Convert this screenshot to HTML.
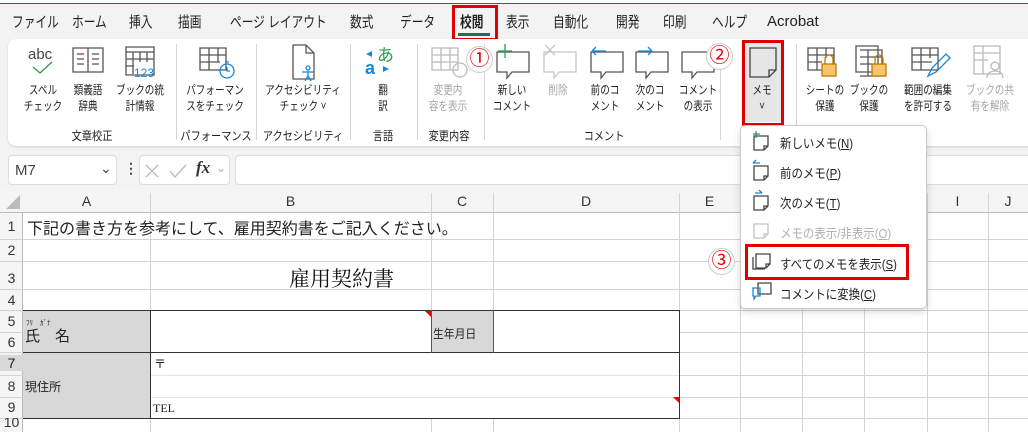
<!DOCTYPE html>
<html><head><meta charset="utf-8"><style>
*{margin:0;padding:0;box-sizing:border-box}
body{width:1028px;height:432px;overflow:hidden;background:#f3f3f3;font-family:"Liberation Sans","Noto Sans CJK JP",sans-serif;position:relative;color:#222}
.a{position:absolute;white-space:nowrap}
.tab{position:absolute;top:11px;font-size:15px;color:#222;white-space:nowrap;transform:scaleX(.78);transform-origin:left}
.lbl{position:absolute;font-size:12px;text-align:center;line-height:16px;color:#222;transform:translateX(-50%) scaleX(.8);white-space:nowrap}
.gl{position:absolute;top:127px;font-size:12px;transform:translateX(-50%) scaleX(.85);color:#222;white-space:nowrap}
.sep{position:absolute;top:44px;width:1px;height:96px;background:#d6d6d6}
.dis{color:#a6a6a6}
.hl{position:absolute;background:#d4d4d4}
.rh{position:absolute;left:0;width:23px;text-align:center;font-size:14px;color:#333}
.ch{position:absolute;top:193px;font-size:14px;text-align:center;color:#333}
.mi{position:absolute;left:780px;font-size:13px;color:#222;white-space:nowrap;transform:scaleX(.88);transform-origin:left}
.circ{position:absolute;width:27px;height:27px;border-radius:50%;background:#fff;border:1px solid #ccc;color:#e00000;font-size:20px;text-align:center;line-height:25px}
</style></head><body>
<div class="a" style="left:0;top:0;width:1028px;height:3px;background:#fff"></div>
<div class="a" style="left:0;top:3px;width:1028px;height:1px;background:#217346"></div>
<div class="tab" style="left:12px">ファイル</div>
<div class="tab" style="left:72px">ホーム</div>
<div class="tab" style="left:129px">挿入</div>
<div class="tab" style="left:178px">描画</div>
<div class="tab" style="left:230px">ページ レイアウト</div>
<div class="tab" style="left:350px">数式</div>
<div class="tab" style="left:400px">データ</div>
<div class="tab" style="left:460px;font-weight:bold">校閲</div>
<div class="a" style="left:458px;top:33px;width:32px;height:3px;background:#1e7145"></div>
<div class="a" style="left:452px;top:5px;width:46px;height:36px;border:3px solid #e00000"></div>
<div class="tab" style="left:506px">表示</div>
<div class="tab" style="left:553px">自動化</div>
<div class="tab" style="left:616px">開発</div>
<div class="tab" style="left:663px">印刷</div>
<div class="tab" style="left:712px">ヘルプ</div>
<div class="a" style="left:767px;top:13px;font-size:15px">Acrobat</div>

<!-- ribbon -->
<div class="a" style="left:8px;top:39px;width:1030px;height:107px;background:#fff;border-radius:8px;box-shadow:0 1px 2px rgba(0,0,0,.15)"></div>
<div class="sep" style="left:176px"></div><div class="sep" style="left:256px"></div><div class="sep" style="left:350px"></div><div class="sep" style="left:417px"></div><div class="sep" style="left:484px"></div><div class="sep" style="left:720px"></div><div class="sep" style="left:796px"></div>

<svg class="a" style="left:0;top:40px" width="1028" height="50" fill="none" stroke-width="1.3">
<text x="28" y="19" font-size="15" fill="#444" stroke="none" font-family="Liberation Sans">abc</text>
<path d="M33 27l7 6 12-11" stroke="#2e9c4a"/>
<path d="M73 8h30v24H73zM88 8v24M77 14h7M77 19h7M77 24h7M92 14h7M92 19h7M92 24h7" stroke="#555"/>
<path d="M78 14h6" stroke="#e04050"/>
<path d="M126 7h28v28h-28zM126 12h28M133 12v22M140 12v10M147 12v10M126 19h28M126 26h8" stroke="#555"/>
<text x="134" y="37" font-size="12" fill="#1a86d8" stroke="none">123</text>
<path d="M200 8h26v22h-26zM200 15h26M200 22h20M209 8v22M218 8v14" stroke="#555"/>
<circle cx="227" cy="31" r="7" stroke="#1a86d8"/><path d="M227 27v4h3M225 22h4" stroke="#1a86d8"/>
<path d="M293 5h13l8 8v26h-21zM306 5v8h8" stroke="#555"/>
<circle cx="308" cy="28" r="2" stroke="#1a86d8"/><path d="M302 32h12M308 31v5l-3 5M308 36l3 5" stroke="#1a86d8"/>
<text x="365" y="34" font-size="18" fill="#1a86d8" stroke="none" font-weight="bold">a</text>
<text x="377" y="21" font-size="17" fill="#2e9c4a" stroke="none">あ</text>
<path d="M366 14l6-3v6zM389 29l-6 3v-6z" fill="#1a86d8" stroke="none"/>
<path d="M432 8h26v22h-26zM432 15h26M432 22h26M441 8v22M450 8v22" stroke="#bbb"/>
<circle cx="460" cy="30" r="7" stroke="#bbb"/>
<path d="M497 12h32v20h-17l-5 6v-6h-10z" stroke="#555"/><path d="M505 4v14M498 11h14" stroke="#2e9c4a"/>
<path d="M544 12h32v20h-17l-5 6v-6h-10z" stroke="#c8c8c8"/><path d="M545 5l10 10M555 5l-10 10" stroke="#c8c8c8"/>
<path d="M591 12h32v20h-17l-5 6v-6h-10z" stroke="#555"/><path d="M592 11h14M592 11l4-4M592 11l4 4" stroke="#1a86d8"/>
<path d="M636 12h32v20h-17l-5 6v-6h-10z" stroke="#555"/><path d="M638 11h14M652 11l-4-4M652 11l-4 4" stroke="#1a86d8"/>
<path d="M682 12h32v20h-17l-5 6v-6h-10z" stroke="#555"/>
<path d="M750 8h30v22l-8 8h-22z M772 38v-8h8" stroke="#444"/>
<path d="M808 8h26v22h-26zM808 15h26M808 22h14M817 8v22M826 8v10" stroke="#555"/><rect x="822" y="24" width="14" height="12" fill="#f8c56a" stroke="#c07a00"/><path d="M825 24v-5a4 4 0 018 0v5" stroke="#c07a00"/>
<path d="M856 6h22v26h-22zM860 10h22v26h-22M860 17h22M860 24h12M868 10v26" stroke="#555"/><rect x="872" y="24" width="14" height="12" fill="#f8c56a" stroke="#c07a00"/><path d="M875 24v-5a4 4 0 018 0v5" stroke="#c07a00"/>
<path d="M912 8h26v22h-26zM912 15h26M912 22h20M921 8v22M930 8v10" stroke="#555"/><path d="M928 36l4-8 14-14 4 4-14 14z" stroke="#1a86d8"/>
<path d="M974 6h26v28h-26zM974 13h26M974 20h14M983 6v28" stroke="#bbb"/><circle cx="995" cy="26" r="4" stroke="#bbb"/><path d="M987 38c0-5 4-7 8-7s8 2 8 7" stroke="#bbb"/>
</svg>

<div class="lbl" style="left:43px;top:82px">スペル<br>チェック</div>
<div class="lbl" style="left:88px;top:82px">類義語<br>辞典</div>
<div class="lbl" style="left:140px;top:82px">ブックの統<br>計情報</div>
<div class="lbl" style="left:215px;top:82px">パフォーマン<br>スをチェック</div>
<div class="lbl" style="left:303px;top:82px">アクセシビリティ<br>チェック ˅</div>
<div class="lbl" style="left:383px;top:82px">翻<br>訳</div>
<div class="lbl dis" style="left:448px;top:82px">変更内<br>容を表示</div>
<div class="lbl" style="left:512px;top:82px">新しい<br>コメント</div>
<div class="lbl dis" style="left:558px;top:82px">削除<br>&nbsp;</div>
<div class="lbl" style="left:605px;top:82px">前のコ<br>メント</div>
<div class="lbl" style="left:650px;top:82px">次のコ<br>メント</div>
<div class="lbl" style="left:698px;top:82px">コメント<br>の表示</div>
<div class="a" style="left:745px;top:42px;width:36px;height:80px;background:#e6e6e6"></div>
<svg class="a" style="left:745px;top:42px" width="36" height="40" fill="none" stroke="#444" stroke-width="1.3"><path d="M5 6h26v22l-7 7H5zM24 35v-7h7"/></svg>
<div class="lbl" style="left:762px;top:82px">メモ<br>˅</div>
<div class="a" style="left:742px;top:40px;width:42px;height:86px;border:3px solid #e00000"></div>
<div class="lbl" style="left:825px;top:82px">シートの<br>保護</div>
<div class="lbl" style="left:869px;top:82px">ブックの<br>保護</div>
<div class="lbl" style="left:928px;top:82px">範囲の編集<br>を許可する</div>
<div class="lbl dis" style="left:990px;top:82px">ブックの共<br>有を解除</div>
<div class="gl" style="left:92px">文章校正</div>
<div class="gl" style="left:216px">パフォーマンス</div>
<div class="gl" style="left:303px">アクセシビリティ</div>
<div class="gl" style="left:383px">言語</div>
<div class="gl" style="left:449px">変更内容</div>
<div class="gl" style="left:604px">コメント</div>
<div class="circ" style="left:466px;top:46px">①</div>
<div class="circ" style="left:706px;top:43px">②</div>

<!-- formula bar -->
<div class="a" style="left:8px;top:155px;width:109px;height:30px;background:#fff;border:1px solid #ddd;border-radius:4px"></div>
<div class="a" style="left:15px;top:162px;font-size:15px;color:#444">M7</div>
<div class="a" style="left:100px;top:160px;font-size:14px;color:#444">⌄</div>
<div class="a" style="left:124px;top:160px;font-size:14px;color:#444;font-weight:bold">⋮</div>
<div class="a" style="left:139px;top:155px;width:91px;height:30px;background:#fff;border:1px solid #ddd;border-radius:4px"></div>
<svg class="a" style="left:143px;top:162px" width="50" height="18" fill="none" stroke="#bbb" stroke-width="1.3"><path d="M3 3l12 12M15 3L3 15M27 9l5 6 11-12"/></svg>
<div class="a" style="left:196px;top:158px;font-size:17px;color:#333;font-family:'Liberation Serif',serif;font-style:italic;font-weight:bold">fx</div>
<div class="a" style="left:216px;top:161px;font-size:12px;color:#aaa">⌄</div>
<div class="a" style="left:235px;top:155px;width:800px;height:30px;background:#fff;border:1px solid #ddd;border-radius:4px"></div>

<!-- grid -->
<div class="a" style="left:0;top:190px;width:1028px;height:242px;background:#fff"></div>
<div class="a" style="left:0;top:190px;width:1028px;height:23px;background:#f5f5f5;border-bottom:1px solid #bbb"></div>
<div class="a" style="left:0;top:213px;width:23px;height:219px;background:#f5f5f5;border-right:1px solid #bbb"></div>
<svg class="a" style="left:5px;top:194px" width="16" height="16"><path d="M15 1V15H1z" fill="#bbb"/></svg>
<div class="ch" style="left:23px;width:127px">A</div>
<div class="ch" style="left:150px;width:281px">B</div>
<div class="ch" style="left:431px;width:62px">C</div>
<div class="ch" style="left:493px;width:186px">D</div>
<div class="ch" style="left:679px;width:61px">E</div>
<div class="ch" style="left:927px;width:61px">I</div>
<div class="ch" style="left:988px;width:40px">J</div>
<div class="hl" style="left:150px;top:193px;width:1px;height:239px"></div>
<div class="hl" style="left:431px;top:193px;width:1px;height:239px"></div>
<div class="hl" style="left:493px;top:193px;width:1px;height:239px"></div>
<div class="hl" style="left:679px;top:193px;width:1px;height:239px"></div>
<div class="hl" style="left:740px;top:193px;width:1px;height:239px"></div>
<div class="hl" style="left:802px;top:193px;width:1px;height:239px"></div>
<div class="hl" style="left:864px;top:193px;width:1px;height:239px"></div>
<div class="hl" style="left:927px;top:193px;width:1px;height:239px"></div>
<div class="hl" style="left:988px;top:193px;width:1px;height:239px"></div>
<div class="hl" style="left:0;top:239px;width:1028px;height:1px"></div>
<div class="hl" style="left:0;top:261px;width:1028px;height:1px"></div>
<div class="hl" style="left:0;top:289px;width:1028px;height:1px"></div>
<div class="hl" style="left:0;top:310px;width:1028px;height:1px"></div>
<div class="hl" style="left:0;top:332px;width:1028px;height:1px"></div>
<div class="hl" style="left:0;top:352px;width:1028px;height:1px"></div>
<div class="hl" style="left:0;top:375px;width:1028px;height:1px"></div>
<div class="hl" style="left:0;top:397px;width:1028px;height:1px"></div>
<div class="hl" style="left:0;top:418px;width:1028px;height:1px"></div>
<div class="rh" style="top:218px">1</div>
<div class="rh" style="top:242px">2</div>
<div class="rh" style="top:270px">3</div>
<div class="rh" style="top:292px">4</div>
<div class="rh" style="top:313px">5</div>
<div class="rh" style="top:334px">6</div>
<div class="rh" style="top:355px;background:#d8d8d8;color:#222">7</div>
<div class="rh" style="top:378px">8</div>
<div class="rh" style="top:399px">9</div>
<div class="rh" style="top:418px;height:10px;overflow:hidden;line-height:8px">10</div>
<div class="a" style="left:23px;top:352px;width:2px;height:23px;background:#217346"></div>

<div class="a" style="left:27px;top:215px;font-size:16px;color:#222">下記の書き方を参考にして、雇用契約書をご記入ください。</div>
<div class="a" style="left:289px;top:263px;font-size:21px;font-family:'Liberation Serif','Noto Serif CJK SC',serif;color:#111">雇用契約書</div>
<div class="a" style="left:23px;top:310px;width:128px;height:108px;background:#d8d8d8"></div>
<div class="a" style="left:431px;top:310px;width:62px;height:43px;background:#d8d8d8"></div>
<div class="a" style="left:151px;top:311px;width:280px;height:41px;background:#fff"></div>
<div class="a" style="left:494px;top:311px;width:185px;height:41px;background:#fff"></div>
<div class="a" style="left:151px;top:353px;width:528px;height:65px;background:#fff"></div>
<div class="hl" style="left:151px;top:375px;width:528px;height:1px;background:#e4e4e4"></div>
<div class="hl" style="left:151px;top:397px;width:528px;height:1px;background:#e4e4e4"></div>
<div class="a" style="left:23px;top:310px;width:657px;height:109px;border:1px solid #333;border-left:none"></div>
<div class="a" style="left:23px;top:352px;width:657px;height:1px;background:#333"></div>
<div class="a" style="left:150px;top:310px;width:1px;height:109px;background:#333"></div>
<div class="a" style="left:431px;top:310px;width:1px;height:43px;background:#555"></div>
<div class="a" style="left:493px;top:310px;width:1px;height:43px;background:#555"></div>
<div class="a" style="left:25px;top:325px;font-size:15px">氏　名</div>
<div class="a" style="left:26px;top:318px;font-size:7px">ﾌﾘ　ｶﾞﾅ</div>
<div class="a" style="left:433px;top:325px;font-size:12px;transform:scaleX(.9);transform-origin:left">生年月日</div>
<div class="a" style="left:25px;top:378px;font-size:12px">現住所</div>
<div class="a" style="left:154px;top:355px;font-size:12px">〒</div>
<div class="a" style="left:153px;top:401px;font-size:12px;font-family:'Liberation Serif',serif">TEL</div>
<svg class="a" style="left:425px;top:311px" width="6" height="6"><path d="M0 0h6v6z" fill="#e00"/></svg>
<svg class="a" style="left:673px;top:397px" width="6" height="6"><path d="M0 0h6v6z" fill="#e00"/></svg>

<!-- dropdown -->
<div class="a" style="left:740px;top:125px;width:187px;height:184px;background:#fff;border:1px solid #ccc;border-radius:5px;box-shadow:0 3px 8px rgba(0,0,0,.15)"></div>
<svg class="a" style="left:752px;top:130px" width="20" height="180" fill="none" stroke-width="1.3">
<g stroke="#444"><path d="M2 6h14v10l-4 4H2zM12 20v-4h4"/></g><path d="M4 1v7M1 4h7" stroke="#2e9c4a"/>
<g stroke="#444" transform="translate(0,30)"><path d="M2 6h14v10l-4 4H2zM12 20v-4h4"/></g><path d="M1 33h7M1 33l3-3" stroke="#1a86d8"/>
<g stroke="#444" transform="translate(0,60)"><path d="M2 6h14v10l-4 4H2zM12 20v-4h4"/></g><path d="M3 63h7M10 63l-3-3" stroke="#1a86d8"/>
<g stroke="#c4c4c4" transform="translate(0,90)"><path d="M2 4h14v10l-4 4H2zM12 18v-4h4"/></g>
<g stroke="#444" transform="translate(0,120)"><path d="M4 4h14v10l-4 4H4zM14 18v-4h4M1 7v12h12"/></g>
<g stroke="#444" transform="translate(0,150)"><path d="M6 3h13v11H6z"/><path d="M1 8h7v8H4l-2 3v-3H1z" stroke="#1a86d8"/></g>
</svg>
<div class="mi" style="top:133px">新しいメモ(<u>N</u>)</div>
<div class="mi" style="top:163px">前のメモ(<u>P</u>)</div>
<div class="mi" style="top:193px">次のメモ(<u>T</u>)</div>
<div class="mi" style="top:223px;color:#b0b0b0">メモの表示/非表示(<u>O</u>)</div>
<div class="mi" style="top:254px">すべてのメモを表示(<u>S</u>)</div>
<div class="mi" style="top:284px">コメントに変換(<u>C</u>)</div>
<div class="a" style="left:745px;top:244px;width:164px;height:36px;border:3px solid #e00000"></div>
<div class="circ" style="left:708px;top:248px">③</div>
</body></html>
